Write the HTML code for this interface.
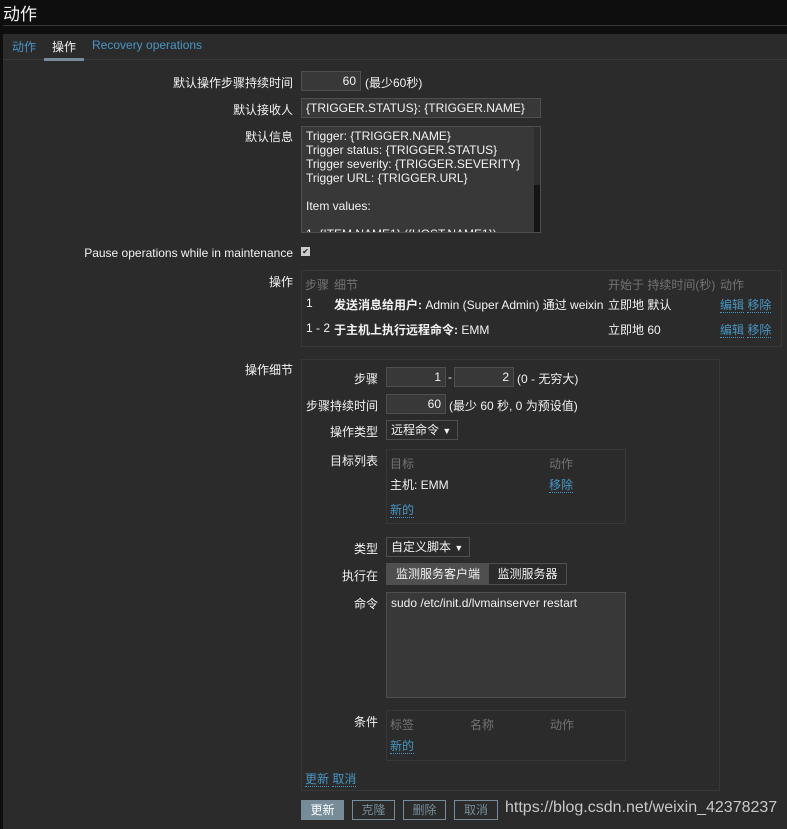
<!DOCTYPE html>
<html><head><meta charset="utf-8"><style>
*{box-sizing:border-box;margin:0;padding:0}
body{width:787px;height:829px;background:#0e0e0e;font-family:"Liberation Sans","Noto Sans CJK SC",sans-serif;font-size:12px;color:#f2f2f2;position:relative;overflow:hidden}
.a{position:absolute;white-space:nowrap}
.lbl{position:absolute;text-align:right;white-space:nowrap}
.in{position:absolute;background:#383838;border:1px solid #4f4f4f;height:20px;line-height:18px;padding:0 4px;color:#f2f2f2}
.box{position:absolute;border:1px solid #383838}
.lk{color:#4796c4;border-bottom:1px dotted #4796c4}
.g{color:#737373}
.btn{position:absolute;height:20px;line-height:18px;border:1px solid #768d99;color:#768d99;text-align:center}
</style></head><body>
<div class="a" style="left:3px;top:0px;font-size:17px;color:#f2f2f2">动作</div>
<div class="a" style="left:3px;top:25px;width:784px;height:1px;background:#383838"></div>
<div class="a" style="left:3px;top:34px;width:784px;height:795px;background:#2b2b2b"></div>
<div class="a" style="left:3px;top:59px;width:784px;height:1px;background:#383838"></div>
<div class="a" style="left:12px;top:38px;color:#4796c4">动作</div>
<div class="a" style="left:52px;top:38px;color:#f2f2f2">操作</div>
<div class="a" style="left:44px;top:58px;width:40px;height:3px;background:#768d99"></div>
<div class="a" style="left:92px;top:38px;color:#4796c4">Recovery operations</div>

<div class="lbl" style="right:494px;top:74px">默认操作步骤持续时间</div>
<div class="in" style="left:301px;top:71px;width:60px;text-align:right">60</div>
<div class="a" style="left:365px;top:74px">(最少60秒)</div>
<div class="lbl" style="right:494px;top:101px">默认接收人</div>
<div class="in" style="left:301px;top:98px;width:240px">{TRIGGER.STATUS}: {TRIGGER.NAME}</div>
<div class="lbl" style="right:494px;top:128px">默认信息</div>
<div class="in" style="left:301px;top:126px;width:240px;height:107px;line-height:14px;padding-top:2px;overflow:hidden;white-space:pre">Trigger: {TRIGGER.NAME}
Trigger status: {TRIGGER.STATUS}
Trigger severity: {TRIGGER.SEVERITY}
Trigger URL: {TRIGGER.URL}

Item values:

1. {ITEM.NAME1} ({HOST.NAME1})</div>
<div class="a" style="left:534px;top:127px;width:6px;height:105px;background:#151515"></div>
<div class="a" style="left:534px;top:127px;width:6px;height:58px;background:#2e2e2e"></div>
<div class="lbl" style="right:494px;top:246px">Pause operations while in maintenance</div>
<div class="a" style="left:301px;top:247px;width:9px;height:9px;background:#ccc;color:#222;font-size:8px;line-height:9px;text-align:center">✔</div>

<div class="lbl" style="right:494px;top:273px">操作</div>
<div class="box" style="left:301px;top:270px;width:481px;height:77px"></div>
<div class="a g" style="left:305px;top:276px">步骤</div><div class="a g" style="left:334px;top:276px">细节</div>
<div class="a g" style="left:608px;top:276px">开始于 持续时间(秒)</div><div class="a g" style="left:720px;top:276px">动作</div>
<div class="a" style="left:306px;top:296px">1</div>
<div class="a" style="left:334px;top:296px"><b>发送消息给用户:</b> Admin (Super Admin) 通过 weixin</div>
<div class="a" style="left:608px;top:296px">立即地 默认</div>
<div class="a" style="left:720px;top:296px"><span class="lk">编辑</span> <span class="lk">移除</span></div>
<div class="a" style="left:306px;top:321px">1 - 2</div>
<div class="a" style="left:334px;top:321px"><b>于主机上执行远程命令:</b> EMM</div>
<div class="a" style="left:608px;top:321px">立即地 60</div>
<div class="a" style="left:720px;top:321px"><span class="lk">编辑</span> <span class="lk">移除</span></div>

<div class="lbl" style="right:494px;top:361px">操作细节</div>
<div class="box" style="left:301px;top:359px;width:419px;height:432px"></div>
<div class="lbl" style="right:409px;top:370px">步骤</div>
<div class="in" style="left:386px;top:367px;width:60px;text-align:right">1</div>
<div class="a" style="left:448px;top:370px">-</div>
<div class="in" style="left:454px;top:367px;width:60px;text-align:right">2</div>
<div class="a" style="left:517px;top:370px">(0 - 无穷大)</div>
<div class="lbl" style="right:409px;top:397px">步骤持续时间</div>
<div class="in" style="left:386px;top:394px;width:60px;text-align:right">60</div>
<div class="a" style="left:449px;top:397px">(最少 60 秒, 0 为预设值)</div>
<div class="lbl" style="right:409px;top:423px">操作类型</div>
<div class="in" style="left:386px;top:420px;width:72px;background:#2b2b2b">远程命令 <span style="font-size:9px">▼</span></div>
<div class="lbl" style="right:409px;top:452px">目标列表</div>
<div class="box" style="left:386px;top:449px;width:240px;height:75px"></div>
<div class="a g" style="left:390px;top:455px">目标</div><div class="a g" style="left:549px;top:455px">动作</div>
<div class="a" style="left:390px;top:476px">主机: EMM</div>
<div class="a" style="left:549px;top:476px"><span class="lk">移除</span></div>
<div class="a" style="left:390px;top:501px"><span class="lk">新的</span></div>
<div class="lbl" style="right:409px;top:540px">类型</div>
<div class="in" style="left:386px;top:537px;width:84px;background:#2b2b2b">自定义脚本 <span style="font-size:9px">▼</span></div>
<div class="lbl" style="right:409px;top:567px">执行在</div>
<div class="a" style="left:386px;top:563px;width:181px;height:22px;border:1px solid #4f4f4f"></div>
<div class="a" style="left:387px;top:564px;width:102px;height:20px;background:#4f4f4f;text-align:center;line-height:20px">监测服务客户端</div>
<div class="a" style="left:489px;top:564px;width:77px;height:20px;text-align:center;line-height:20px">监测服务器</div>
<div class="lbl" style="right:409px;top:595px">命令</div>
<div class="in" style="left:386px;top:592px;width:240px;height:106px;line-height:14px;padding-top:3px">sudo /etc/init.d/lvmainserver restart</div>
<div class="lbl" style="right:409px;top:713px">条件</div>
<div class="box" style="left:386px;top:710px;width:240px;height:51px"></div>
<div class="a g" style="left:390px;top:716px">标签</div><div class="a g" style="left:470px;top:716px">名称</div><div class="a g" style="left:550px;top:716px">动作</div>
<div class="a" style="left:390px;top:737px"><span class="lk">新的</span></div>
<div class="a" style="left:305px;top:770px"><span class="lk">更新</span> <span class="lk">取消</span></div>

<div class="btn" style="left:301px;top:800px;width:43px;background:#768d99;color:#fff">更新</div>
<div class="btn" style="left:352px;top:800px;width:43px">克隆</div>
<div class="btn" style="left:403px;top:800px;width:43px">删除</div>
<div class="btn" style="left:454px;top:800px;width:44px">取消</div>
<div class="a" style="left:505px;top:799px;font-size:16px;color:#c8c8c8">https://blog.csdn.net/weixin_42378237</div>
</body></html>
